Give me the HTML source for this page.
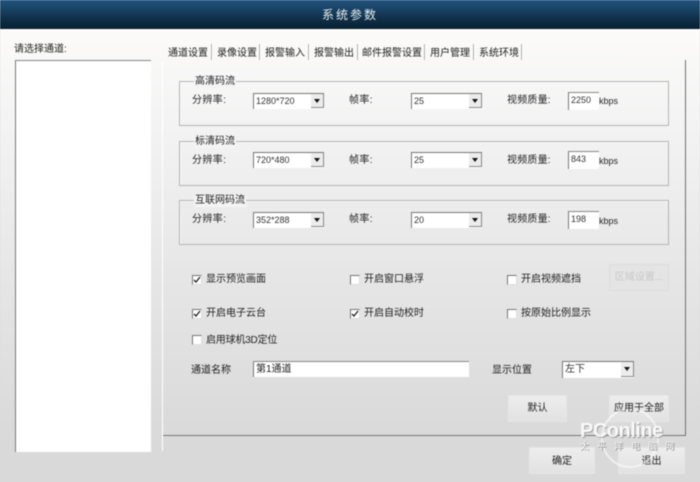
<!DOCTYPE html>
<html><head><meta charset="utf-8">
<style>
html,body{margin:0;padding:0}
body{width:700px;height:482px;overflow:hidden;position:relative;background:#d9d9d9;font-family:"Liberation Sans","Noto Sans CJK SC",sans-serif;font-size:10px;color:#222}
#wrap{position:absolute;left:0;top:0;width:700px;height:482px;filter:blur(.4px)}
#bg{position:absolute;left:0;top:29px;width:700px;height:453px;background:linear-gradient(#fcfbfa 0,#f3f3f3 100px,#e6e6e6 250px,#dadada 400px,#d9d9d9 100%)}
#title{position:absolute;left:0;top:0;width:700px;height:29px;background:linear-gradient(#21537f 0,#1a4467 30%,#0f3049 65%,#072030 100%);color:#e8edf0;font-size:12px;line-height:30px;text-align:center;letter-spacing:2px}
.t{position:absolute;white-space:nowrap;line-height:12px}
.list{position:absolute;left:15px;top:60px;width:135px;height:391px;background:#fff;border-top:1px solid #858585;border-left:1px solid #777}
.pl{position:absolute;left:162px;top:62px;width:1px;height:389px;background:#fff}
.pr{position:absolute;left:685px;top:60px;width:1px;height:376px;background:#6e6e6e}
.pb{position:absolute;left:163px;top:435px;width:523px;height:1px;background:#777}
.tabsep{position:absolute;top:44px;width:1px;height:16px;background:#b0b0b0;border-right:1px solid #fff}
.g{position:absolute;left:179px;width:488px;height:43px;border:1px solid #b4b4b4;box-shadow:inset 1px 1px 0 #f8f8f8}
.gl{position:absolute;left:194px;background:#f4f4f4;padding:0 1px;font-size:10px;line-height:12px}
.s{position:absolute;height:15px;background:#fff;border-top:1px solid #777;border-left:1px solid #777;font-size:9px;line-height:15px;color:#333;padding-left:2px;box-sizing:content-box}
.s i{position:absolute;right:0;top:0;width:12px;height:13px;background:#ececec;border-right:1px solid #888;border-bottom:1px solid #888}
.s i:after{content:"";position:absolute;left:3px;top:5px;border-left:3px solid transparent;border-right:3px solid transparent;border-top:4px solid #111}
.i{position:absolute;width:28px;height:17px;background:#fff;border-top:1px solid #888;border-left:1px solid #777;font-size:9px;line-height:15px;padding-left:2px;color:#333}
.c{position:absolute;width:8px;height:8px;background:#fff;border-top:1px solid #777;border-left:1px solid #777;border-right:1px solid #ddd;border-bottom:1px solid #ddd}
.c svg{position:absolute;left:0;top:0}
.b{position:absolute;background:linear-gradient(#ededed,#e2e2e2);border:1px solid #e6e6e6;box-sizing:border-box;text-align:center;font-size:10px;color:#222}
.wm{position:absolute;color:#fff;white-space:nowrap}
</style></head><body>
<div id="wrap">
<div id="bg"></div>
<div id="title">系统参数</div>
<div class="t" style="left:14px;top:44px">请选择通道:</div>
<div class="list"></div>
<div class="pl"></div><div class="pr"></div><div class="pb"></div>

<div class="t" style="left:168px;top:48px">通道设置</div><div class="tabsep" style="left:211px"></div>
<div class="t" style="left:217px;top:48px">录像设置</div><div class="tabsep" style="left:259px"></div>
<div class="t" style="left:265px;top:48px">报警输入</div><div class="tabsep" style="left:308px"></div>
<div class="t" style="left:314px;top:48px">报警输出</div><div class="tabsep" style="left:357px"></div>
<div class="t" style="left:362px;top:48px">邮件报警设置</div><div class="tabsep" style="left:424px"></div>
<div class="t" style="left:430px;top:48px">用户管理</div><div class="tabsep" style="left:473px"></div>
<div class="t" style="left:479px;top:48px">系统环境</div><div class="tabsep" style="left:521px"></div>

<div class="g" style="top:81px"></div>
<div class="gl" style="top:76px">高清码流</div>
<div class="t" style="left:192px;top:95px;letter-spacing:.4px">分辨率:</div>
<div class="s" style="left:253px;top:93px;width:68px">1280*720<i></i></div>
<div class="t" style="left:349px;top:95px;letter-spacing:.4px">帧率:</div>
<div class="s" style="left:411px;top:93px;width:68px">25<i></i></div>
<div class="t" style="left:507px;top:95px;letter-spacing:.2px">视频质量:</div>
<div class="i" style="left:568px;top:92px">2250</div>
<div class="t" style="left:599px;top:95px;font-size:9px">kbps</div>

<div class="g" style="top:141px"></div>
<div class="gl" style="top:136px">标清码流</div>
<div class="t" style="left:192px;top:155px;letter-spacing:.4px">分辨率:</div>
<div class="s" style="left:253px;top:152px;width:68px">720*480<i></i></div>
<div class="t" style="left:349px;top:155px;letter-spacing:.4px">帧率:</div>
<div class="s" style="left:411px;top:152px;width:68px">25<i></i></div>
<div class="t" style="left:507px;top:155px;letter-spacing:.2px">视频质量:</div>
<div class="i" style="left:568px;top:151px">843</div>
<div class="t" style="left:599px;top:155px;font-size:9px">kbps</div>

<div class="g" style="top:200px"></div>
<div class="gl" style="top:195px">互联网码流</div>
<div class="t" style="left:192px;top:214px;letter-spacing:.4px">分辨率:</div>
<div class="s" style="left:253px;top:212px;width:68px">352*288<i></i></div>
<div class="t" style="left:349px;top:214px;letter-spacing:.4px">帧率:</div>
<div class="s" style="left:411px;top:212px;width:68px">20<i></i></div>
<div class="t" style="left:507px;top:214px;letter-spacing:.2px">视频质量:</div>
<div class="i" style="left:568px;top:211px">198</div>
<div class="t" style="left:599px;top:215px;font-size:9px">kbps</div>

<div class="c" style="left:192px;top:275px"><svg width="8" height="8"><path d="M1 4l2 2 4-5" fill="none" stroke="#222" stroke-width="1.3"/></svg></div>
<div class="t" style="left:206px;top:274px">显示预览画面</div>
<div class="c" style="left:350px;top:275px"></div>
<div class="t" style="left:364px;top:274px">开启窗口悬浮</div>
<div class="c" style="left:507px;top:275px"></div>
<div class="t" style="left:521px;top:274px">开启视频遮挡</div>
<div class="b" style="left:609px;top:264px;width:60px;height:27px;line-height:25px;color:#c8c8c8;background:#e4e4e4;border-color:#dcdcdc">区域设置...</div>

<div class="c" style="left:192px;top:309px"><svg width="8" height="8"><path d="M1 4l2 2 4-5" fill="none" stroke="#222" stroke-width="1.3"/></svg></div>
<div class="t" style="left:206px;top:308px">开启电子云台</div>
<div class="c" style="left:350px;top:309px"><svg width="8" height="8"><path d="M1 4l2 2 4-5" fill="none" stroke="#222" stroke-width="1.3"/></svg></div>
<div class="t" style="left:364px;top:308px">开启自动校时</div>
<div class="c" style="left:507px;top:309px"></div>
<div class="t" style="left:521px;top:308px">按原始比例显示</div>

<div class="c" style="left:192px;top:335px"></div>
<div class="t" style="left:206px;top:335px;letter-spacing:-.2px">启用球机3D定位</div>

<div class="t" style="left:191px;top:365px">通道名称</div>
<div style="position:absolute;left:253px;top:361px;width:213px;height:15px;background:#fff;border-top:1px solid #888;border-left:1px solid #777;font-size:10px;line-height:15px;padding-left:2px;box-sizing:content-box">第1通道</div>
<div class="t" style="left:492px;top:365px">显示位置</div>
<div class="s" style="left:562px;top:361px;width:69px;font-size:10px;height:16px">左下<i style="height:14px"></i></div>

<div class="b" style="left:508px;top:395px;width:59px;height:27px;line-height:25px">默认</div>
<div class="b" style="left:609px;top:395px;width:60px;height:27px;line-height:25px">应用于全部</div>
<div class="b" style="left:529px;top:447px;width:66px;height:27px;line-height:27px">确定</div>
<div class="b" style="left:618px;top:447px;width:67px;height:27px;line-height:27px">退出</div>

<svg style="position:absolute;left:600px;top:410px" width="90" height="65"><ellipse cx="30" cy="28" rx="28" ry="29" fill="none" stroke="#fff" stroke-width="2" opacity=".55"/></svg>
<div class="wm" style="left:580px;top:420px;font-size:20px;line-height:22px;font-weight:bold;letter-spacing:-.5px;opacity:.85;text-shadow:1px 1px 0 #999">PConline</div>
<div class="wm" style="left:580px;top:441px;font-size:9px;line-height:11px;letter-spacing:8px;color:#f4f4f4;text-shadow:1px 1px 0 #888">太平洋电脑网</div>
</div>
</body></html>
